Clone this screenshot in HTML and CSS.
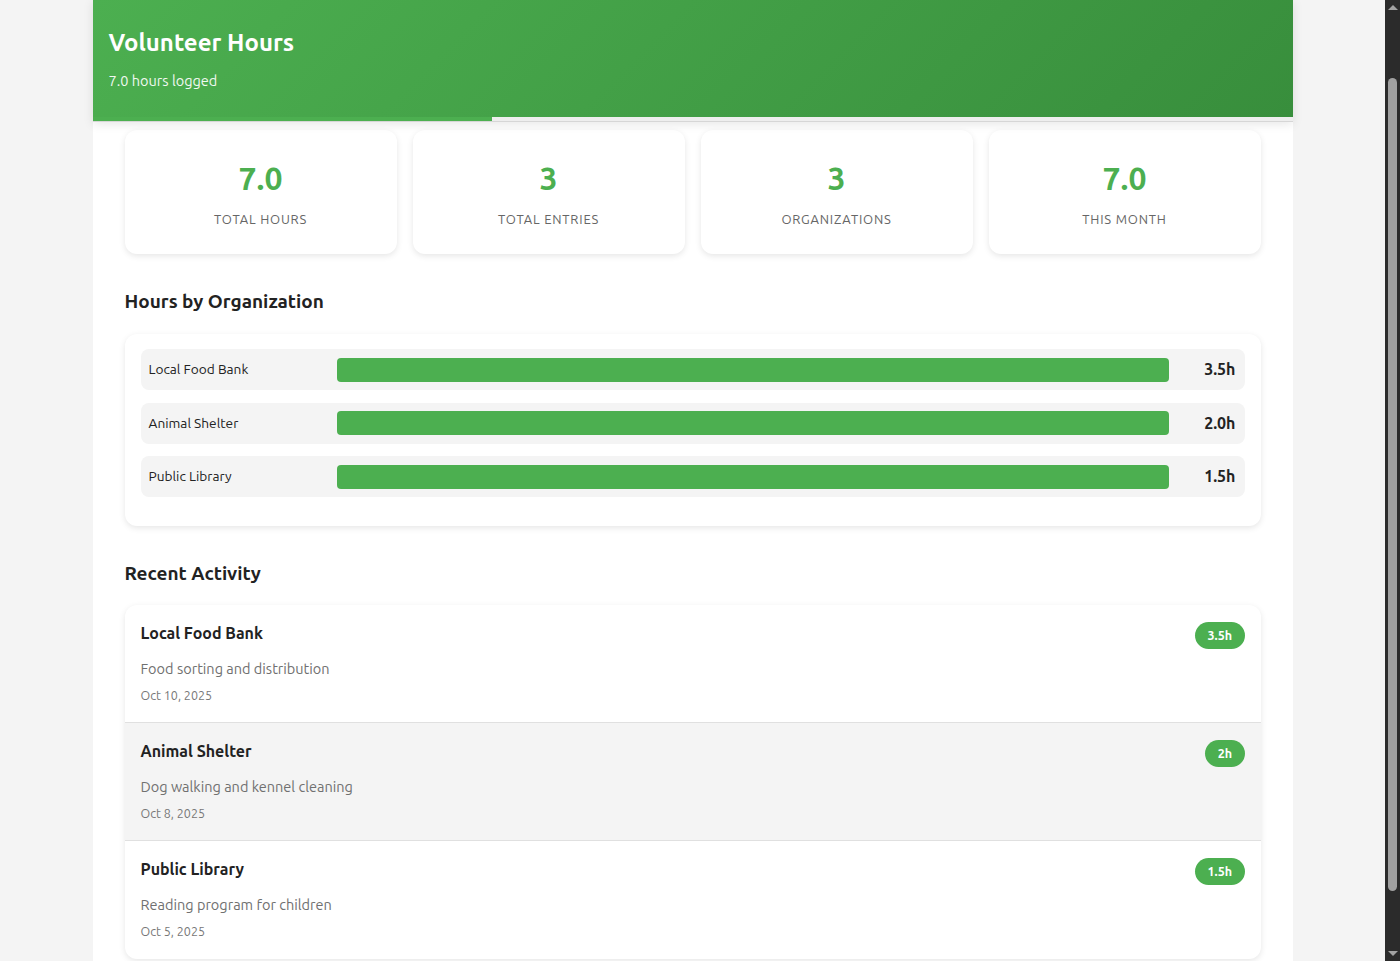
FILE: index.html
```html
<!DOCTYPE html>
<html lang="en">
<head>
<meta charset="utf-8">
<title>Volunteer Hours</title>
<link rel="stylesheet" href="styles.css">
</head>
<body>
<div class="app">
  <header class="topbar">
    <div class="hero">
      <h1 class="hero-title">Volunteer Hours</h1>
      <p class="hero-sub">7.0 hours logged</p>
    </div>
    <div class="track"><div class="track-fill" style="width: 33.333%"></div></div>
  </header>

  <main class="content">
    <section class="stats">
      <div class="stat-card">
        <div class="stat-value">7.0</div>
        <div class="stat-label">Total Hours</div>
      </div>
      <div class="stat-card">
        <div class="stat-value">3</div>
        <div class="stat-label">Total Entries</div>
      </div>
      <div class="stat-card">
        <div class="stat-value">3</div>
        <div class="stat-label">Organizations</div>
      </div>
      <div class="stat-card">
        <div class="stat-value">7.0</div>
        <div class="stat-label">This Month</div>
      </div>
    </section>

    <section class="section">
      <h2 class="section-title">Hours by Organization</h2>
      <div class="panel">
        <div class="org-row">
          <span class="org-name">Local Food Bank</span>
          <div class="org-bar"><div class="org-fill" style="width: 100%"></div></div>
          <span class="org-value">3.5h</span>
        </div>
        <div class="org-row">
          <span class="org-name">Animal Shelter</span>
          <div class="org-bar"><div class="org-fill" style="width: 100%"></div></div>
          <span class="org-value">2.0h</span>
        </div>
        <div class="org-row">
          <span class="org-name">Public Library</span>
          <div class="org-bar"><div class="org-fill" style="width: 100%"></div></div>
          <span class="org-value">1.5h</span>
        </div>
      </div>
    </section>

    <section class="section">
      <h2 class="section-title section-title--tight">Recent Activity</h2>
      <div class="activity">
        <div class="activity-item">
          <div class="activity-main">
            <div class="activity-org">Local Food Bank</div>
            <div class="activity-desc">Food sorting and distribution</div>
            <div class="activity-date">Oct 10, 2025</div>
          </div>
          <span class="badge">3.5h</span>
        </div>
        <div class="activity-item is-hover">
          <div class="activity-main">
            <div class="activity-org">Animal Shelter</div>
            <div class="activity-desc">Dog walking and kennel cleaning</div>
            <div class="activity-date">Oct 8, 2025</div>
          </div>
          <span class="badge">2h</span>
        </div>
        <div class="activity-item">
          <div class="activity-main">
            <div class="activity-org">Public Library</div>
            <div class="activity-desc">Reading program for children</div>
            <div class="activity-date">Oct 5, 2025</div>
          </div>
          <span class="badge">1.5h</span>
        </div>
      </div>
    </section>
  </main>
</div>

<div class="scrollbar" aria-hidden="true">
  <span class="scroll-arrow up"></span>
  <span class="scroll-track"><span class="scroll-thumb"></span></span>
  <span class="scroll-arrow down"></span>
</div>
</body>
</html>
```

FILE: styles.css
```css
* { box-sizing: border-box; }

html, body {
  margin: 0;
  padding: 0;
}

body {
  background: #f4f4f4;
  font-family: "Ubuntu", "Noto Sans", "Open Sans", sans-serif;
  color: #222;
  padding-right: 15px;
}

.app {
  width: 1200px;
  margin: 0 auto;
  background: #ffffff;
  min-height: 961px;
}

.topbar {
  background: #ffffff;
  box-shadow: 0 2px 10px rgba(0, 0, 0, 0.10);
  position: relative;
  z-index: 2;
}

.hero {
  height: 117px;
  padding: 28px 16px 0;
  background: linear-gradient(135deg, #4caf50 0%, #388e3c 100%);
  color: #ffffff;
}

.hero-title {
  margin: 0;
  font-size: 24px;
  font-weight: 600;
  line-height: 30px;
}

.hero-sub {
  margin: 14px 0 0;
  font-size: 14.5px;
  line-height: 18px;
  opacity: 0.92;
}

.track {
  height: 5px;
  background: #eeeeee;
  border-bottom: 1px solid #d6d6d6;
}

.track-fill {
  height: 4px;
  background: #4caf50;
}

.content {
  padding: 8px 32px 32px;
}

.stats {
  display: grid;
  grid-template-columns: repeat(4, 1fr);
  gap: 16px;
}

.stat-card {
  height: 124px;
  background: #ffffff;
  border-radius: 12px;
  box-shadow: 0 2px 6px rgba(0, 0, 0, 0.10);
  display: flex;
  flex-direction: column;
  align-items: center;
  padding-top: 30px;
}

.stat-value {
  font-size: 32px;
  font-weight: 700;
  line-height: 36px;
  color: #4caf50;
}

.stat-label {
  margin-top: 15px;
  font-size: 13px;
  line-height: 16px;
  letter-spacing: 0.8px;
  text-transform: uppercase;
  color: #666666;
}

.section {
  margin-top: 35px;
}

.section-title {
  margin: 0 0 21px;
  font-size: 19px;
  font-weight: 600;
  line-height: 24px;
  color: #222222;
}

.section-title--tight {
  margin-bottom: 20px;
}

.panel {
  background: #ffffff;
  border-radius: 12px;
  box-shadow: 0 2px 6px rgba(0, 0, 0, 0.10);
  padding: 15px 16px 16px;
}

.org-row {
  display: flex;
  align-items: center;
  gap: 8px;
  height: 41px;
  padding: 0 9px 0 8px;
  margin-bottom: 12.5px;
  background: #f4f4f4;
  border-radius: 8px;
}

.org-name {
  width: 180px;
  flex: none;
  font-size: 13.7px;
  line-height: 18px;
  padding-bottom: 1px;
  color: #222222;
}

.org-bar {
  flex: 1;
  height: 24px;
}

.org-fill {
  height: 100%;
  background: #4caf50;
  border-radius: 4px;
}

.org-value {
  width: 59px;
  flex: none;
  text-align: right;
  font-size: 16px;
  font-weight: 600;
  line-height: 20px;
  padding-bottom: 1px;
  color: #222222;
}

.activity {
  background: #ffffff;
  border-radius: 12px;
  box-shadow: 0 2px 6px rgba(0, 0, 0, 0.10);
  overflow: hidden;
}

.activity-item {
  display: flex;
  justify-content: space-between;
  align-items: flex-start;
  padding: 16px 16px 15px;
  height: 118px;
  border-bottom: 1px solid #e0e0e0;
}

.activity-item:last-child {
  border-bottom: none;
}

.activity-item.is-hover {
  background: #f4f4f4;
}

.activity-org {
  font-size: 16px;
  font-weight: 600;
  line-height: 24px;
  color: #222222;
}

.activity-desc {
  margin-top: 14px;
  font-size: 14.5px;
  line-height: 20px;
  color: #707070;
}

.activity-date {
  margin-top: 8px;
  font-size: 12.5px;
  line-height: 16px;
  color: #777777;
}

.badge {
  margin-top: 1px;
  padding: 0 12.5px;
  height: 27px;
  line-height: 27px;
  border-radius: 14px;
  background: #4caf50;
  color: #ffffff;
  font-size: 12.5px;
  font-weight: 600;
}

.scrollbar {
  position: fixed;
  top: 0;
  right: 0;
  width: 15px;
  height: 100vh;
  background: #2b2b2b;
  display: flex;
  flex-direction: column;
}

.scroll-arrow {
  height: 15px;
  flex: none;
  display: flex;
  align-items: center;
  justify-content: center;
}

.scroll-arrow::before {
  content: "";
  border-left: 5px solid transparent;
  border-right: 5px solid transparent;
}

.scroll-arrow.up::before {
  border-bottom: 5px solid #a3a3a3;
}

.scroll-arrow.down::before {
  border-top: 5px solid #a3a3a3;
}

.scroll-track {
  flex: 1;
  padding: 63px 3px 55px;
  display: flex;
}

.scroll-thumb {
  flex: 1;
  background: #a0a0a0;
  border-radius: 5px;
}
```
